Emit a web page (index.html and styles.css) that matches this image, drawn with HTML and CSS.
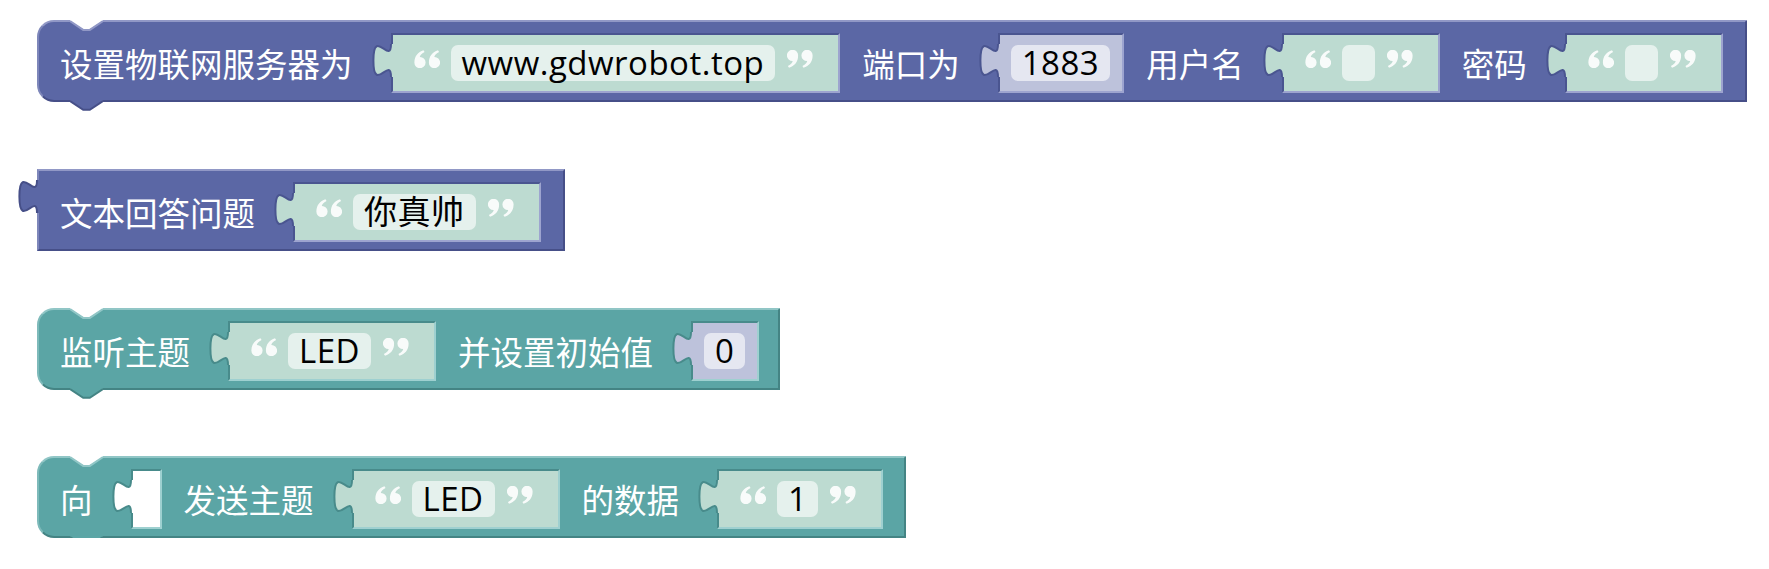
FILE: index.html
```html
<!DOCTYPE html>
<html lang="zh-CN">
<head>
<meta charset="utf-8">
<title>Blocks</title>
<link rel="stylesheet" href="styles.css">
</head>
<body>
<svg class="defs" width="0" height="0" aria-hidden="true">
  <defs>
    <symbol id="tab" viewBox="0 0 21 33">
      <path stroke="none" d="M21,0 H19 c0,22 -17.6,-17.6 -17.6,16.5 s17.6,-5.5 17.6,16.5 H21 Z"/>
      <path fill="none" stroke-width="2" d="M19,0 c0,22 -17.6,-17.6 -17.6,16.5 s17.6,-5.5 17.6,16.5"/>
    </symbol>
    <symbol id="qo" viewBox="0 0 26 18">
      <path d="M0.4,12.3 C0.4,6.3 4,2 9.5,0.2 L10.6,2 C7.4,3.6 6.1,5.3 5.8,7 A5.6,5.6 0 1 1 0.4,12.3 Z"/>
      <path transform="translate(14.5 0)" d="M0.4,12.3 C0.4,6.3 4,2 9.5,0.2 L10.6,2 C7.4,3.6 6.1,5.3 5.8,7 A5.6,5.6 0 1 1 0.4,12.3 Z"/>
    </symbol>
    <symbol id="qc" viewBox="0 0 26 18">
      <g transform="rotate(180 13 9)">
        <path d="M0.4,12.3 C0.4,6.3 4,2 9.5,0.2 L10.6,2 C7.4,3.6 6.1,5.3 5.8,7 A5.6,5.6 0 1 1 0.4,12.3 Z"/>
        <path transform="translate(14.5 0)" d="M0.4,12.3 C0.4,6.3 4,2 9.5,0.2 L10.6,2 C7.4,3.6 6.1,5.3 5.8,7 A5.6,5.6 0 1 1 0.4,12.3 Z"/>
      </g>
    </symbol>
    <symbol id="notch" viewBox="0 0 33 12">
      <polygon fill="#ffffff" stroke="none" points="-1,0 13.2,9.2 19.8,9.2 34,0"/>
      <polyline fill="none" stroke-width="2" points="0,1 13.2,9.9 19.8,9.9 33,1"/>
    </symbol>
    <symbol id="next" viewBox="0 0 33 12">
      <polygon stroke="none" points="0,-1 0,1 13.2,9.8 19.8,9.8 33,1 33,-1"/>
      <polyline fill="none" stroke-width="2" points="0,1 13.2,9.8 19.8,9.8 33,1"/>
    </symbol>
  </defs>
</svg>

<main class="canvas">

  <!-- Block 1 -->
  <div class="block purple rounded b1">
    <svg class="notch" width="33" height="12"><use href="#notch"/></svg>
    <svg class="next" width="33" height="12"><use href="#next"/></svg>
    <span class="label">设置物联网服务器为</span>
    <div class="slot">
      <svg class="tab str-tab" width="21" height="33"><use href="#tab"/></svg>
      <div class="shadow str">
        <svg class="quote q-open" width="26" height="18"><use href="#qo"/></svg>
        <span class="pill">www.gdwrobot.top</span>
        <svg class="quote q-close" width="26" height="18"><use href="#qc"/></svg>
      </div>
    </div>
    <span class="label">端口为</span>
    <div class="slot">
      <svg class="tab num-tab" width="21" height="33"><use href="#tab"/></svg>
      <div class="shadow num">
        <span class="pill">1883</span>
      </div>
    </div>
    <span class="label">用户名</span>
    <div class="slot">
      <svg class="tab str-tab" width="21" height="33"><use href="#tab"/></svg>
      <div class="shadow str">
        <svg class="quote q-open" width="26" height="18"><use href="#qo"/></svg>
        <span class="pill empty"></span>
        <svg class="quote q-close" width="26" height="18"><use href="#qc"/></svg>
      </div>
    </div>
    <span class="label">密码</span>
    <div class="slot">
      <svg class="tab str-tab" width="21" height="33"><use href="#tab"/></svg>
      <div class="shadow str">
        <svg class="quote q-open" width="26" height="18"><use href="#qo"/></svg>
        <span class="pill empty"></span>
        <svg class="quote q-close" width="26" height="18"><use href="#qc"/></svg>
      </div>
    </div>
  </div>

  <!-- Block 2 -->
  <div class="block purple b2">
    <svg class="out" width="21" height="33"><use href="#tab"/></svg>
    <span class="label">文本回答问题</span>
    <div class="slot">
      <svg class="tab str-tab" width="21" height="33"><use href="#tab"/></svg>
      <div class="shadow str">
        <svg class="quote q-open" width="26" height="18"><use href="#qo"/></svg>
        <span class="pill">你真帅</span>
        <svg class="quote q-close" width="26" height="18"><use href="#qc"/></svg>
      </div>
    </div>
  </div>

  <!-- Block 3 -->
  <div class="block teal rounded b3">
    <svg class="notch" width="33" height="12"><use href="#notch"/></svg>
    <svg class="next" width="33" height="12"><use href="#next"/></svg>
    <span class="label">监听主题</span>
    <div class="slot">
      <svg class="tab str-tab" width="21" height="33"><use href="#tab"/></svg>
      <div class="shadow str">
        <svg class="quote q-open" width="26" height="18"><use href="#qo"/></svg>
        <span class="pill">LED</span>
        <svg class="quote q-close" width="26" height="18"><use href="#qc"/></svg>
      </div>
    </div>
    <span class="label">并设置初始值</span>
    <div class="slot">
      <svg class="tab num-tab" width="21" height="33"><use href="#tab"/></svg>
      <div class="shadow num">
        <span class="pill">0</span>
      </div>
    </div>
  </div>

  <!-- Block 4 -->
  <div class="block teal rounded b4">
    <svg class="notch" width="33" height="12"><use href="#notch"/></svg>
    <svg class="next" width="33" height="12"><use href="#next"/></svg>
    <span class="label">向</span>
    <div class="slot">
      <svg class="tab hole-tab" width="21" height="33"><use href="#tab"/></svg>
      <div class="shadow hole"></div>
    </div>
    <span class="label">发送主题</span>
    <div class="slot">
      <svg class="tab str-tab" width="21" height="33"><use href="#tab"/></svg>
      <div class="shadow str">
        <svg class="quote q-open" width="26" height="18"><use href="#qo"/></svg>
        <span class="pill">LED</span>
        <svg class="quote q-close" width="26" height="18"><use href="#qc"/></svg>
      </div>
    </div>
    <span class="label">的数据</span>
    <div class="slot">
      <svg class="tab str-tab" width="21" height="33"><use href="#tab"/></svg>
      <div class="shadow str">
        <svg class="quote q-open" width="26" height="18"><use href="#qo"/></svg>
        <span class="pill">1</span>
        <svg class="quote q-close" width="26" height="18"><use href="#qc"/></svg>
      </div>
    </div>
  </div>

</main>
</body>
</html>
```

FILE: styles.css
```css
html, body {
  margin: 0;
  padding: 0;
  background: #ffffff;
}

.defs {
  position: absolute;
  width: 0;
  height: 0;
  overflow: hidden;
}

.canvas {
  display: flex;
  flex-direction: column;
  align-items: flex-start;
  padding-left: 37px;
}

.block {
  position: relative;
  box-sizing: border-box;
  display: flex;
  align-items: center;
  height: 82px;
  padding: 11px 22px 7px 21px;
  border-style: solid;
  border-width: 2px;
}

.b1 { margin-top: 20px; }
.b2 { margin-top: 67px; }
.b3 { margin-top: 57px; padding-right: 19px; }
.b4 { margin-top: 66px; padding-right: 21px; }

.rounded {
  border-radius: 17px 0 0 17px;
}

.purple {
  background: #5b67a5;
  border-color: #9198c6 #464f88 #464f88 #7e87ba;
}

.teal {
  background: #5ba5a5;
  border-color: #91c6c6 #448484 #448484 #7ebaba;
}

/* previous-connection notch */
.notch {
  position: absolute;
  top: -2px;
  left: 31px;
  overflow: visible;
}
.purple .notch { stroke: #9198c6; }
.teal .notch { stroke: #91c6c6; }

/* next-connection tab */
.next {
  position: absolute;
  top: 100%;
  left: 31px;
  overflow: visible;
}
.purple .next { fill: #5b67a5; stroke: #464f88; }
.teal .next { fill: #5ba5a5; stroke: #448484; }

/* output tab */
.out {
  position: absolute;
  left: -21px;
  top: 9px;
  fill: #5b67a5;
  stroke: #464f88;
}

.label {
  color: #ffffff;
  font-family: "Noto Sans CJK SC", "Noto Sans", sans-serif;
  font-size: 32.5px;
  line-height: 1;
  white-space: nowrap;
  margin-right: 19px;
}

.slot {
  display: flex;
  align-items: flex-start;
  margin-right: 22px;
}
.slot:last-child { margin-right: 0; }

.tab {
  flex: none;
  position: relative;
  z-index: 1;
  margin-top: 11px;
  margin-right: -2px;
}
.str-tab { fill: #bddbd1; }
.num-tab { fill: #bdc2db; }
.hole-tab { fill: #ffffff; }
.purple .tab { stroke: #4a5590; }
.teal .tab { stroke: #488b8b; }

.shadow {
  box-sizing: border-box;
  display: flex;
  align-items: center;
  height: 60px;
  border-style: solid;
  border-width: 2px;
}
.purple .shadow { border-color: #4a5590 #9da4cf #9da4cf #4a5590; }
.teal .shadow { border-color: #488b8b #9ed0d0 #9ed0d0 #488b8b; }

.str {
  background: #bddbd1;
  padding: 0 25px 0 21px;
}
.num {
  background: #bdc2db;
  padding: 0 12px 0 11px;
}
.hole {
  width: 31px;
  background: #ffffff;
}

.quote {
  flex: none;
  fill: #ffffff;
  opacity: 0.9;
  margin-bottom: 8px;
}
.q-open { margin-right: 11px; }
.q-close { margin-left: 12px; }

.pill {
  box-sizing: border-box;
  height: 36px;
  line-height: 36px;
  padding: 0 11px;
  border-radius: 7px;
  font-family: "Open Sans", "Noto Sans CJK SC", sans-serif;
  font-size: 33px;
  letter-spacing: 0.5px;
  color: #000000;
  white-space: nowrap;
}
.str .pill { background: #e5f1ed; }
.num .pill { background: #e5e7f1; }
.pill.empty {
  width: 33px;
  padding: 0;
}
```
